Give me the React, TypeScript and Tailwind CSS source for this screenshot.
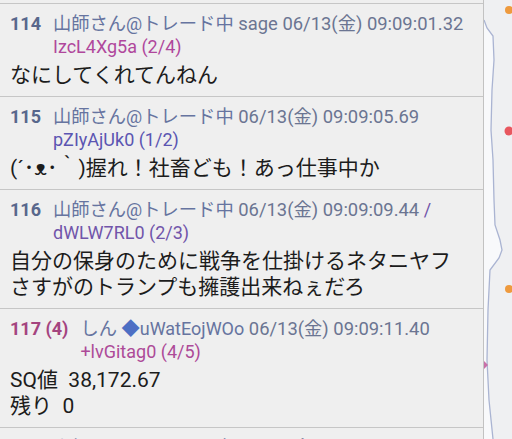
import React from "react";

type Post = {
  num: string;
  numColor: string;
  name: React.ReactNode;
  line1Tail: React.ReactNode;
  id: string;
  idColor: string;
  body: string[];
};

const FONT = { fontFamily: 'Roboto, "Noto Sans CJK JP", sans-serif' };

const J = ({ children }: { children: React.ReactNode }) => (
  <span className="text-[18.3px]">{children}</span>
);

const Date = ({ pre, time }: { pre?: string; time: string }) => (
  <span className="text-[#6b7592] text-[18.4px]">
    {pre ?? " "}06/13(<J>金</J>) {time}
  </span>
);

const posts: Post[] = [
  {
    num: "114",
    numColor: "text-[#58678c]",
    name: (
      <span className="text-[#6674a0]">
        <J>山師さん</J>@<J>トレード中</J>
      </span>
    ),
    line1Tail: <Date pre=" sage " time="09:09:01.32" />,
    id: "IzcL4Xg5a (2/4)",
    idColor: "text-[#b0479c]",
    body: ["なにしてくれてんねん"],
  },
  {
    num: "115",
    numColor: "text-[#58678c]",
    name: (
      <span className="text-[#6674a0]">
        <J>山師さん</J>@<J>トレード中</J>
      </span>
    ),
    line1Tail: <Date time="09:09:05.69" />,
    id: "pZIyAjUk0 (1/2)",
    idColor: "text-[#5b55b2]",
    body: ["(´･ᴥ･｀)握れ！社畜ども！あっ仕事中か"],
  },
  {
    num: "116",
    numColor: "text-[#58678c]",
    name: (
      <span className="text-[#6674a0]">
        <J>山師さん</J>@<J>トレード中</J>
      </span>
    ),
    line1Tail: (
      <>
        <Date time="09:09:09.44 " />
        <span className="text-[#7155aa]">/</span>
      </>
    ),
    id: "dWLW7RL0 (2/3)",
    idColor: "text-[#7155aa]",
    body: ["自分の保身のために戦争を仕掛けるネタニヤフ", "さすがのトランプも擁護出来ねぇだろ"],
  },
  {
    num: "117 (4)",
    numColor: "text-[#a4447f]",
    name: (
      <span className="text-[#6674a0]">
        <J>しん</J> <J><span className="text-[#4d6fc4]">◆</span></J>uWatEojWOo
      </span>
    ),
    line1Tail: <Date time="09:09:11.40" />,
    id: "+lvGitag0 (4/5)",
    idColor: "text-[#ad4a98]",
    body: ["SQ値  38,172.67", "残り  0"],
  },
  {
    num: "118",
    numColor: "text-[#58678c]",
    name: (
      <span className="text-[#6674a0]">
        <J>山師さん</J>@<J>トレード中</J>
      </span>
    ),
    line1Tail: <Date time="09:09:12.03" />,
    id: "IzcL4Xg5a (3/4)",
    idColor: "text-[#b0479c]",
    body: ["…"],
  },
];

function Row({ p }: { p: Post }) {
  return (
    <div className="border-t border-[#c6c6c6] px-[10px] pt-[8px] pb-[8px]">
      <div className="flex gap-[12px] text-[18px] leading-[23px] whitespace-nowrap">
        <span className={`font-bold ${p.numColor}`}>{p.num}</span>
        <div className="flex flex-col">
          <div className="h-[23px]">
            {p.name}
            {p.line1Tail}
          </div>
          <div className={`h-[23px] ${p.idColor}`}>{p.id}</div>
        </div>
      </div>
      <div className="mt-[4px] text-[21px] leading-[26px] text-[#1c1c1c] whitespace-pre">
        {p.body.map((b, i) => (
          <div key={i}>{b}</div>
        ))}
      </div>
    </div>
  );
}

export default function App() {
  return (
    <div className="w-[512px] h-[439px] overflow-hidden flex bg-[#efefef]" style={FONT}>
      <div className="w-[484px] shrink-0 border-r border-[#c2c2c2] pt-[3px]">
        {posts.map((p) => (
          <Row key={p.num} p={p} />
        ))}
      </div>
      <div className="relative flex-1 bg-[#eff0f2]">
        <svg className="absolute left-0 top-0" width="28" height="439" viewBox="0 0 28 439">
          <path
            d="M0 0 L0 20 L3 28 L9 36 L10 60 L8 90 L7 130 L9 160 L10 200 L11 225 L16 240 L18 250 L15 258 L6 270 L4 310 L3 360 L5 400 L9 439 L0 439 Z"
            fill="#f8f9fb"
          />
          <path
            d="M0 20 L3 28 L9 36 L10 60 L8 90 L7 130 L9 160 L10 200 L11 225 L16 240 L18 250 L15 258 L6 270 L4 310 L3 360 L5 400 L9 439"
            fill="none"
            stroke="#aab4d2"
            strokeWidth="1.3"
          />
          <circle cx="25" cy="10" r="4" fill="#ee9a3e" />
          <circle cx="25" cy="131" r="4.5" fill="#e8575f" />
          <circle cx="25" cy="289" r="4" fill="#ee9a3e" />
          <path d="M0 361 L4 365 L0 369 Z" fill="#c86fa8" />
        </svg>
      </div>
    </div>
  );
}
